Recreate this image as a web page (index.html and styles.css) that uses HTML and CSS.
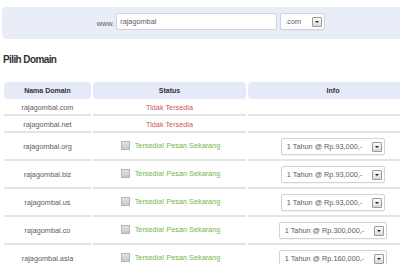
FILE: index.html
```html
<!DOCTYPE html>
<html lang="id">
<head>
    <meta charset="UTF-8">
    <meta name="viewport" content="width=device-width, initial-scale=1.0">
    <title>Pilih Domain</title>
    <link rel="stylesheet" href="styles.css">
</head>
<body>

    <div class="search">
        <span class="www">www.</span>
        <div class="field">rajagombal</div>
        <div class="select ext">
            <span>.com</span>
            <i class="arrow"></i>
        </div>
    </div>

    <h2>Pilih Domain</h2>

    <table class="domains">
        <colgroup>
            <col class="c-name">
            <col class="c-status">
            <col class="c-info">
        </colgroup>
        <thead>
            <tr>
                <th>Nama Domain</th>
                <th>Status</th>
                <th>Info</th>
            </tr>
        </thead>
        <tbody>
            <tr class="short">
                <td class="name">rajagombal.com</td>
                <td><span class="taken">Tidak Tersedia</span></td>
                <td></td>
            </tr>
            <tr class="short">
                <td class="name">rajagombal.net</td>
                <td><span class="taken">Tidak Tersedia</span></td>
                <td></td>
            </tr>
            <tr>
                <td class="name">rajagombal.org</td>
                <td><span class="free"><i class="check"></i>Tersedia! Pesan Sekarang</span></td>
                <td><div class="select"><span>1 Tahun @ Rp.93,000,-</span><i class="arrow"></i></div></td>
            </tr>
            <tr>
                <td class="name">rajagombal.biz</td>
                <td><span class="free"><i class="check"></i>Tersedia! Pesan Sekarang</span></td>
                <td><div class="select"><span>1 Tahun @ Rp.93,000,-</span><i class="arrow"></i></div></td>
            </tr>
            <tr>
                <td class="name">rajagombal.us</td>
                <td><span class="free"><i class="check"></i>Tersedia! Pesan Sekarang</span></td>
                <td><div class="select"><span>1 Tahun @ Rp.93,000,-</span><i class="arrow"></i></div></td>
            </tr>
            <tr>
                <td class="name">rajagombal.co</td>
                <td><span class="free"><i class="check"></i>Tersedia! Pesan Sekarang</span></td>
                <td><div class="select"><span>1 Tahun @ Rp.300,000,-</span><i class="arrow"></i></div></td>
            </tr>
            <tr>
                <td class="name">rajagombal.asia</td>
                <td><span class="free"><i class="check"></i>Tersedia! Pesan Sekarang</span></td>
                <td><div class="select"><span>1 Tahun @ Rp.160,000,-</span><i class="arrow"></i></div></td>
            </tr>
        </tbody>
    </table>

</body>
</html>
```

FILE: styles.css
```css
body {
    font-family: "Liberation Sans", Arial, sans-serif;
    font-size: 7.3px;
    color: #5c5c5c;
    margin: 0;
    background-color: #fff;
    overflow: hidden;
}

/* kotak pencarian */
.search {
    width: 418px;
    margin: 7px 0 0 2px;
    padding: 6px 0 9px;
    box-sizing: border-box;
    height: 32px;
    background-color: #e8edf7;
    border-radius: 4px;
    display: flex;
    align-items: center;
    justify-content: center;
}

.www {
    margin-right: 2px;
    padding-top: 3px;
}

.field {
    width: 161px;
    height: 17px;
    box-sizing: border-box;
    padding: 0 3px;
    line-height: 15px;
    background-color: #fff;
    border: 1px solid #cfd3da;
    border-radius: 2px;
}

.select {
    display: inline-flex;
    align-items: center;
    height: 17px;
    box-sizing: border-box;
    padding: 0 2px 0 5px;
    background-color: #fff;
    border: 1px solid #cfd3da;
    border-radius: 2px;
    box-shadow: 0 1px 1px rgba(0, 0, 0, 0.04);
}

.select span {
    margin-right: 10px;
}

.ext {
    width: 45px;
    margin-left: 3px;
    padding-left: 4px;
    justify-content: space-between;
}

.ext span {
    margin-right: 0;
}

.arrow {
    position: relative;
    width: 10px;
    height: 10px;
    box-sizing: border-box;
    border: 1px solid #9a9a9a;
    border-radius: 1px;
    background: linear-gradient(#fbfbfb, #d9d9d9);
}

.arrow::after {
    content: "";
    position: absolute;
    left: 2px;
    top: 3px;
    border-left: 2px solid transparent;
    border-right: 2px solid transparent;
    border-top: 2px solid #222;
}

h2 {
    font-size: 10px;
    line-height: 12px;
    letter-spacing: -0.6px;
    color: #333;
    margin: 15px 0 16px 3px;
}

/* tabel domain */
.domains {
    width: 418px;
    margin-left: 2px;
    table-layout: fixed;
    border-collapse: separate;
    border-spacing: 2px 0;
}

.c-name { width: 87px; }
.c-status { width: 153px; }
.c-info { width: 170px; }

.domains th {
    height: 17px;
    padding: 0;
    font-weight: bold;
    font-size: 7px;
    color: #333;
    background-color: #e4eaf7;
    border-radius: 4px;
}

.domains td {
    height: 25px;
    padding: 1px 0 0;
    text-align: center;
    border-bottom: 2px solid #e4e4e4;
}

.domains tr.short td {
    height: 14px;
}

.taken {
    color: #d2545f;
}

.free {
    display: inline-flex;
    align-items: center;
    margin-left: 2px;
    color: #74b84c;
}

.check {
    width: 9px;
    height: 9px;
    box-sizing: border-box;
    margin-right: 5px;
    border: 1px solid #b5b5b5;
    background: linear-gradient(#e4e4e4, #c9c9c9);
}
```
